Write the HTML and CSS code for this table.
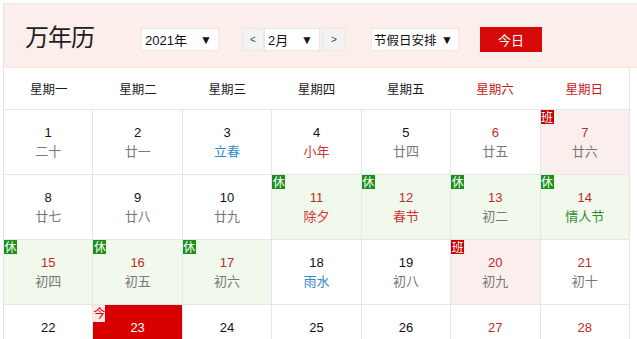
FILE: index.html
```html
<!DOCTYPE html>
<html lang="zh-CN">
<head>
<meta charset="utf-8">
<title>万年历</title>
<link rel="stylesheet" href="styles.css">
</head>
<body>
<div class="cal">
  <div class="head">
    <h1 class="title">万年历</h1>
    <div class="sel sel-year"><span>2021年</span><span class="arr">▼</span></div>
    <div class="month-group">
      <span class="btn-nav">&lt;</span>
      <div class="sel sel-month"><span>2月</span><span class="arr">▼</span></div>
      <span class="btn-nav">&gt;</span>
    </div>
    <div class="sel sel-hol"><span>节假日安排</span><span class="arr">▼</span></div>
    <span class="btn-today">今日</span>
  </div>
  <div class="week">
    <div>星期一</div><div>星期二</div><div>星期三</div><div>星期四</div><div>星期五</div><div class="we">星期六</div><div class="we">星期日</div>
  </div>
  <div class="grid">
    <div class="cell"><span class="n">1</span><span class="l">二十</span></div>
    <div class="cell"><span class="n">2</span><span class="l">廿一</span></div>
    <div class="cell"><span class="n">3</span><span class="l term">立春</span></div>
    <div class="cell"><span class="n">4</span><span class="l fest">小年</span></div>
    <div class="cell"><span class="n">5</span><span class="l">廿四</span></div>
    <div class="cell"><span class="n red">6</span><span class="l">廿五</span></div>
    <div class="cell work"><i class="tag ban">班</i><span class="n red">7</span><span class="l">廿六</span></div>

    <div class="cell"><span class="n">8</span><span class="l">廿七</span></div>
    <div class="cell"><span class="n">9</span><span class="l">廿八</span></div>
    <div class="cell"><span class="n">10</span><span class="l">廿九</span></div>
    <div class="cell rest"><i class="tag xiu">休</i><span class="n red">11</span><span class="l fest">除夕</span></div>
    <div class="cell rest"><i class="tag xiu">休</i><span class="n red">12</span><span class="l fest">春节</span></div>
    <div class="cell rest"><i class="tag xiu">休</i><span class="n red">13</span><span class="l">初二</span></div>
    <div class="cell rest"><i class="tag xiu">休</i><span class="n red">14</span><span class="l green">情人节</span></div>

    <div class="cell rest"><i class="tag xiu">休</i><span class="n red">15</span><span class="l">初四</span></div>
    <div class="cell rest"><i class="tag xiu">休</i><span class="n red">16</span><span class="l">初五</span></div>
    <div class="cell rest"><i class="tag xiu">休</i><span class="n red">17</span><span class="l">初六</span></div>
    <div class="cell"><span class="n">18</span><span class="l term">雨水</span></div>
    <div class="cell"><span class="n">19</span><span class="l">初八</span></div>
    <div class="cell work"><i class="tag ban">班</i><span class="n red">20</span><span class="l">初九</span></div>
    <div class="cell"><span class="n red">21</span><span class="l">初十</span></div>

    <div class="cell"><span class="n">22</span></div>
    <div class="cell today"><i class="tag jin">今</i><span class="n">23</span></div>
    <div class="cell"><span class="n">24</span></div>
    <div class="cell"><span class="n">25</span></div>
    <div class="cell"><span class="n">26</span></div>
    <div class="cell"><span class="n red">27</span></div>
    <div class="cell"><span class="n red">28</span></div>
  </div>
</div>
</body>
</html>
```

FILE: styles.css
```css
* { box-sizing: border-box; }
html, body { margin: 0; padding: 0; overflow: hidden; background: #fff; }
body {
  font-family: "Liberation Sans", "Noto Sans CJK SC", sans-serif;
  color: #222;
}
.cal {
  margin: 3px 0 0 3px;
  border-top: 1px solid #ececec;
  border-left: 1px solid #e4e4e4;
  width: 640px;
}
.head {
  height: 64px;
  background: #fbeeeb;
  display: flex;
  align-items: flex-start;
  padding-left: 21px;
  border-bottom: 1px solid #f1e6e4;
}
.title {
  margin: 17px 0 0 0;
  font-size: 24px;
  line-height: 30px;
  font-weight: normal;
  color: #1e1e1e;
  font-family: "Noto Sans CJK SC", sans-serif;
  letter-spacing: -1px;
}
.sel {
  margin-top: 24px;
  height: 23px;
  background: #fff;
  border: 1px solid #ece6e5;
  display: flex;
  align-items: center;
  justify-content: space-between;
  padding: 0 6px 0 3px;
  font-size: 13px;
  color: #111;
}
.arr { font-size: 12px; color: #111; }
.sel-year { width: 78px; margin-left: 47px; }
.month-group {
  margin-top: 24px;
  margin-left: 23px;
  display: flex;
  align-items: stretch;
  height: 23px;
}
.month-group .sel { margin-top: 0; width: 56px; }
.btn-nav {
  width: 22px;
  background: #f4f3f3;
  border: 1px solid #ebe7e6;
  font-size: 10px;
  color: #444;
  display: flex;
  align-items: center;
  justify-content: center;
}
.btn-nav:last-child { width: 24px; margin-left: 2px; }
.sel-hol { width: 88px; margin-left: 25px; padding-left: 2px; padding-right: 5px; font-size: 12.5px; }
.btn-today {
  margin-top: 23px;
  margin-left: 21px;
  width: 62px;
  height: 25px;
  background: #d70a0a;
  color: #fff;
  font-size: 13px;
  display: flex;
  align-items: center;
  justify-content: center;
}
.week {
  width: 626px;
  display: grid;
  grid-template-columns: repeat(7, 1fr);
  height: 42px;
  border-bottom: 1px solid #e6e6e6;
  border-right: 1px solid #e6e6e6;
}
.week div {
  display: flex;
  align-items: center;
  justify-content: center;
  font-size: 12.5px;
  color: #1c1c1c;
}
.week .we { color: #c41a1a; }
.grid {
  width: 626px;
  display: grid;
  grid-template-columns: repeat(7, 1fr);
  grid-auto-rows: 65px;
}
.cell {
  position: relative;
  border-right: 1px solid #e6e6e6;
  border-bottom: 1px solid #e6e6e6;
  display: flex;
  flex-direction: column;
  align-items: center;
  padding-top: 14px;
}
.n { font-size: 13px; line-height: 17px; color: #111; }
.l {
  font-size: 13px;
  line-height: 19px;
  color: #777;
  font-family: "Noto Sans CJK SC", sans-serif;
}
.red { color: #c02a2a; }
.term { color: #2f8ac8; }
.fest { color: #d23333; }
.green { color: #2e8a2e; }
.rest { background: #f1f8ec; }
.work { background: #fbefed; }
.tag {
  position: absolute;
  left: 0;
  top: 0;
  font-style: normal;
  font-size: 12px;
  line-height: 14px;
  width: 13px;
  height: 14px;
  text-align: center;
  color: #fff;
  font-family: "Noto Sans CJK SC", sans-serif;
}
.xiu { background: #1a8f1a; }
.ban { background: #c40000; }
.today { background: #d90000; }
.today .n { color: #fff; }
.jin {
  background: #fde8e8;
  color: #d00;
  width: 12px;
  height: 17px;
  line-height: 15px;
}
```
